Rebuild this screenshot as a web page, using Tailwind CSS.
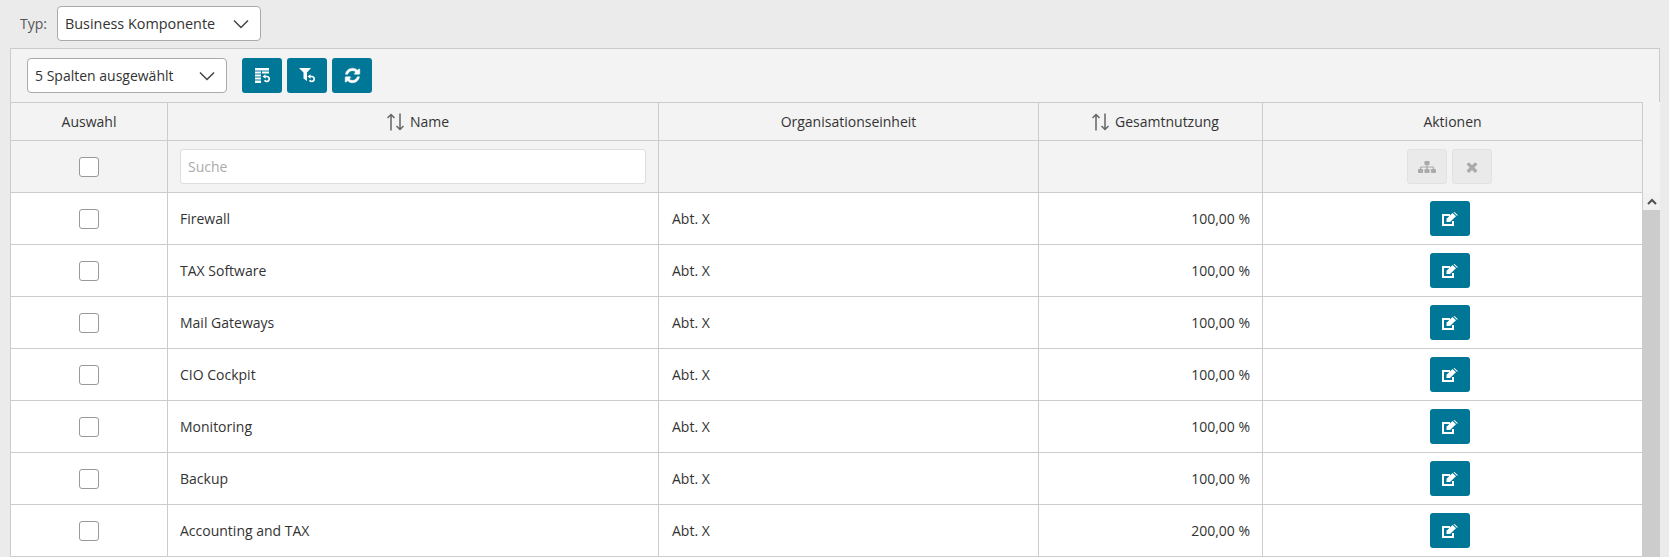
<!DOCTYPE html>
<html lang="de">
<head>
<meta charset="utf-8">
<title>Business Komponente</title>
<script src="https://cdn.jsdelivr.net/npm/@tailwindcss/browser@4"></script>
</head>
<body class="m-0 h-[557px] w-[1669px] overflow-hidden bg-[#ebebeb] font-['Open_Sans',sans-serif] text-[14px] text-[#333]">
<div class="flex h-[48px] items-start pl-[20px] pt-[6px]">
  <span class="mr-[10px] flex h-[35px] items-center text-[#555]">Typ:</span>
  <div class="flex h-[35px] w-[204px] items-center justify-between rounded-[4px] border border-[#aaa] bg-white pl-[7px] pr-[11px]">
    <span class="text-[14.4px]">Business Komponente</span>
    <svg width="16" height="10" viewBox="0 0 16 10" fill="none" stroke="#444" stroke-width="1.5"><path d="M1 1.5l7 7 7-7"/></svg>
  </div>
</div>
<div class="ml-[10px] h-[509px] w-[1650px] border-l border-t border-[#ccc] bg-[#f3f3f3]">
  <div class="flex h-[53px] items-start border-r border-[#ccc] pl-[16px] pt-[9px]">
    <div class="flex h-[35px] w-[200px] items-center justify-between rounded-[4px] border border-[#aaa] bg-white pl-[7px] pr-[11px]">
      <span>5 Spalten ausgewählt</span>
      <svg width="16" height="10" viewBox="0 0 16 10" fill="none" stroke="#444" stroke-width="1.5"><path d="M1 1.5l7 7 7-7"/></svg>
    </div>
    <div class="ml-[15px] flex gap-[5px]">
      <button class="flex h-[35px] w-[40px] items-center justify-center rounded-[3px] bg-[#007796]">
        <svg width="15" height="15" viewBox="0 0 15 15" fill="#fff"><path d="M0 0h14v2.500H0zM0 3.500h6v2H0zM7 3.500h7v2H7zM0 6.500h6v2H0zM0 9.500h6v2H0zM0 12.500h6V15H0z"/><path d="M9 8.500h3a2.500 2.500 0 1 1-2.400 3.800" fill="none" stroke="#fff" stroke-width="1.700"/><path d="M7.500 8.500l3-2.200v4.400z"/></svg>
      </button>
      <button class="flex h-[35px] w-[40px] items-center justify-center rounded-[3px] bg-[#007796]">
        <svg width="16" height="15" viewBox="0 0 16 15" fill="#fff"><path d="M0 0h12L8 4.500V13L4.500 10.500V4.500z"/><path d="M10 8.500h3a2.500 2.500 0 1 1-2.400 3.800" fill="none" stroke="#fff" stroke-width="1.700"/><path d="M8.500 8.500l3-2.200v4.400z"/></svg>
      </button>
      <button class="flex h-[35px] w-[40px] items-center justify-center rounded-[3px] bg-[#007796]">
        <svg width="17" height="17" viewBox="0 0 1792 1792" fill="#fff" stroke="#fff" stroke-width="50"><path d="M1639 1056q0 5-1 7-64 268-268 434.500t-478 166.500q-146 0-282.500-55t-243.500-157l-129 129q-19 19-45 19t-45-19-19-45v-448q0-26 19-45t45-19h448q26 0 45 19t19 45-19 45l-137 137q71 66 161 102t187 36q134 0 250-65t186-179q11-17 53-117 8-23 30-23h192q13 0 22.500 9.500t9.500 22.500zm25-800v448q0 26-19 45t-45 19h-448q-26 0-45-19t-19-45 19-45l138-138q-148-137-349-137-134 0-250 65t-186 179q-11 17-53 117-8 23-30 23h-199q-13 0-22.500-9.500t-9.500-22.500v-7q65-268 270-434.500t480-166.500q146 0 284 55.500t245 156.500l130-129q19-19 45-19t45 19 19 45z"/></svg>
      </button>
    </div>
  </div>

  <div class="grid w-[1632px] grid-cols-[157px_491px_380px_224px_380px] border-t border-[#ccc]">
    <div class="flex h-[38px] items-center justify-center border-r border-b border-[#ccc]">Auswahl</div>
    <div class="flex h-[38px] items-center justify-center gap-[6px] border-r border-b border-[#ccc] pl-[10px]">
      <svg width="17" height="18" viewBox="0 0 17 18" fill="none" stroke="#666" stroke-width="1.500"><path d="M4 17.500V1.500M.5 5L4 1.500 7.500 5"/><path d="M13 .5v16M9.500 13L13 16.500 16.500 13"/></svg>
      <span>Name</span>
    </div>
    <div class="flex h-[38px] items-center justify-center border-r border-b border-[#ccc]">Organisationseinheit</div>
    <div class="flex h-[38px] items-center justify-center gap-[6px] border-r border-b border-[#ccc] pl-[10px]">
      <svg width="17" height="18" viewBox="0 0 17 18" fill="none" stroke="#666" stroke-width="1.500"><path d="M4 17.500V1.500M.5 5L4 1.500 7.500 5"/><path d="M13 .5v16M9.500 13L13 16.500 16.500 13"/></svg>
      <span>Gesamtnutzung</span>
    </div>
    <div class="flex h-[38px] items-center justify-center border-r border-b border-[#ccc]">Aktionen</div>

    <div class="flex h-[52px] items-center justify-center border-r border-b border-[#ccc]">
      <span class="h-[20px] w-[20px] rounded-[3px] border border-[#999] bg-white"></span>
    </div>
    <div class="flex h-[52px] items-center border-r border-b border-[#ccc] px-[12px]">
      <div class="flex h-[35px] w-full items-center rounded-[3px] border border-[#ddd] bg-white px-[7px] text-[#aaa]">Suche</div>
    </div>
    <div class="h-[52px] border-r border-b border-[#ccc]"></div>
    <div class="h-[52px] border-r border-b border-[#ccc]"></div>
    <div class="flex h-[52px] items-center justify-center gap-[5px] border-r border-b border-[#ccc] pr-[6px]">
      <span class="flex h-[35px] w-[40px] items-center justify-center rounded-[3px] border border-[#e2e2e2] bg-[#eaeaea]">
        <svg width="18" height="14" viewBox="0 0 1792 1792" preserveAspectRatio="none" fill="#aaa"><path d="M1792 1248v320q0 40-28 68t-68 28h-320q-40 0-68-28t-28-68v-320q0-40 28-68t68-28h96v-192h-512v192h96q40 0 68 28t28 68v320q0 40-28 68t-68 28h-320q-40 0-68-28t-28-68v-320q0-40 28-68t68-28h96v-192h-512v192h96q40 0 68 28t28 68v320q0 40-28 68t-68 28h-320q-40 0-68-28t-28-68v-320q0-40 28-68t68-28h96v-192q0-52 38-90t90-38h512v-192h-96q-40 0-68-28t-28-68v-320q0-40 28-68t68-28h320q40 0 68 28t28 68v320q0 40-28 68t-68 28h-96v192h512q52 0 90 38t38 90v192h96q40 0 68 28t28 68z"/></svg>
      </span>
      <span class="flex h-[35px] w-[40px] items-center justify-center rounded-[3px] border border-[#e2e2e2] bg-[#eaeaea]">
        <svg width="12" height="12" viewBox="200 200 1392 1392" fill="#aaa"><path d="M1490 1322q0 40-28 68l-136 136q-28 28-68 28t-68-28l-294-294-294 294q-28 28-68 28t-68-28l-136-136q-28-28-28-68t28-68l294-294-294-294q-28-28-28-68t28-68l136-136q28-28 68-28t68 28l294 294 294-294q28-28 68-28t68 28l136 136q28 28 28 68t-28 68l-294 294 294 294q28 28 28 68z"/></svg>
      </span>
    </div>
  </div>

  <div class="flex items-start">
    <div class="grid w-[1632px] grid-cols-[157px_491px_380px_224px_380px] bg-white">
      <div class="flex h-[52px] items-center justify-center border-r border-b border-[#ccc]"><span class="h-[20px] w-[20px] rounded-[3px] border border-[#999] bg-white"></span></div>
      <div class="flex h-[52px] items-center border-r border-b border-[#ccc] px-[12px]">Firewall</div>
      <div class="flex h-[52px] items-center border-r border-b border-[#ccc] px-[13px]">Abt. X</div>
      <div class="flex h-[52px] items-center justify-end border-r border-b border-[#ccc] px-[12px]">100,00 %</div>
      <div class="flex h-[52px] items-center justify-center border-r border-b border-[#ccc] pr-[5px]"><button class="flex h-[35px] w-[40px] items-center justify-center rounded-[3px] bg-[#007796]"><svg width="16" height="14" viewBox="0 0 16 14"><path d="M8 3H1v10h10V9" fill="none" stroke="#fff" stroke-width="2"/><path d="M4.500 6.700L10.500 1 14 4.300 8 10H4.500zM11.600.5l.9-.5 3.200 2.900-.5 1.100z" fill="#fff"/></svg></button></div>

      <div class="flex h-[52px] items-center justify-center border-r border-b border-[#ccc]"><span class="h-[20px] w-[20px] rounded-[3px] border border-[#999] bg-white"></span></div>
      <div class="flex h-[52px] items-center border-r border-b border-[#ccc] px-[12px]">TAX Software</div>
      <div class="flex h-[52px] items-center border-r border-b border-[#ccc] px-[13px]">Abt. X</div>
      <div class="flex h-[52px] items-center justify-end border-r border-b border-[#ccc] px-[12px]">100,00 %</div>
      <div class="flex h-[52px] items-center justify-center border-r border-b border-[#ccc] pr-[5px]"><button class="flex h-[35px] w-[40px] items-center justify-center rounded-[3px] bg-[#007796]"><svg width="16" height="14" viewBox="0 0 16 14"><path d="M8 3H1v10h10V9" fill="none" stroke="#fff" stroke-width="2"/><path d="M4.500 6.700L10.500 1 14 4.300 8 10H4.500zM11.600.5l.9-.5 3.200 2.900-.5 1.100z" fill="#fff"/></svg></button></div>

      <div class="flex h-[52px] items-center justify-center border-r border-b border-[#ccc]"><span class="h-[20px] w-[20px] rounded-[3px] border border-[#999] bg-white"></span></div>
      <div class="flex h-[52px] items-center border-r border-b border-[#ccc] px-[12px]">Mail Gateways</div>
      <div class="flex h-[52px] items-center border-r border-b border-[#ccc] px-[13px]">Abt. X</div>
      <div class="flex h-[52px] items-center justify-end border-r border-b border-[#ccc] px-[12px]">100,00 %</div>
      <div class="flex h-[52px] items-center justify-center border-r border-b border-[#ccc] pr-[5px]"><button class="flex h-[35px] w-[40px] items-center justify-center rounded-[3px] bg-[#007796]"><svg width="16" height="14" viewBox="0 0 16 14"><path d="M8 3H1v10h10V9" fill="none" stroke="#fff" stroke-width="2"/><path d="M4.500 6.700L10.500 1 14 4.300 8 10H4.500zM11.600.5l.9-.5 3.200 2.900-.5 1.100z" fill="#fff"/></svg></button></div>

      <div class="flex h-[52px] items-center justify-center border-r border-b border-[#ccc]"><span class="h-[20px] w-[20px] rounded-[3px] border border-[#999] bg-white"></span></div>
      <div class="flex h-[52px] items-center border-r border-b border-[#ccc] px-[12px]">CIO Cockpit</div>
      <div class="flex h-[52px] items-center border-r border-b border-[#ccc] px-[13px]">Abt. X</div>
      <div class="flex h-[52px] items-center justify-end border-r border-b border-[#ccc] px-[12px]">100,00 %</div>
      <div class="flex h-[52px] items-center justify-center border-r border-b border-[#ccc] pr-[5px]"><button class="flex h-[35px] w-[40px] items-center justify-center rounded-[3px] bg-[#007796]"><svg width="16" height="14" viewBox="0 0 16 14"><path d="M8 3H1v10h10V9" fill="none" stroke="#fff" stroke-width="2"/><path d="M4.500 6.700L10.500 1 14 4.300 8 10H4.500zM11.600.5l.9-.5 3.200 2.900-.5 1.100z" fill="#fff"/></svg></button></div>

      <div class="flex h-[52px] items-center justify-center border-r border-b border-[#ccc]"><span class="h-[20px] w-[20px] rounded-[3px] border border-[#999] bg-white"></span></div>
      <div class="flex h-[52px] items-center border-r border-b border-[#ccc] px-[12px]">Monitoring</div>
      <div class="flex h-[52px] items-center border-r border-b border-[#ccc] px-[13px]">Abt. X</div>
      <div class="flex h-[52px] items-center justify-end border-r border-b border-[#ccc] px-[12px]">100,00 %</div>
      <div class="flex h-[52px] items-center justify-center border-r border-b border-[#ccc] pr-[5px]"><button class="flex h-[35px] w-[40px] items-center justify-center rounded-[3px] bg-[#007796]"><svg width="16" height="14" viewBox="0 0 16 14"><path d="M8 3H1v10h10V9" fill="none" stroke="#fff" stroke-width="2"/><path d="M4.500 6.700L10.500 1 14 4.300 8 10H4.500zM11.600.5l.9-.5 3.200 2.900-.5 1.100z" fill="#fff"/></svg></button></div>

      <div class="flex h-[52px] items-center justify-center border-r border-b border-[#ccc]"><span class="h-[20px] w-[20px] rounded-[3px] border border-[#999] bg-white"></span></div>
      <div class="flex h-[52px] items-center border-r border-b border-[#ccc] px-[12px]">Backup</div>
      <div class="flex h-[52px] items-center border-r border-b border-[#ccc] px-[13px]">Abt. X</div>
      <div class="flex h-[52px] items-center justify-end border-r border-b border-[#ccc] px-[12px]">100,00 %</div>
      <div class="flex h-[52px] items-center justify-center border-r border-b border-[#ccc] pr-[5px]"><button class="flex h-[35px] w-[40px] items-center justify-center rounded-[3px] bg-[#007796]"><svg width="16" height="14" viewBox="0 0 16 14"><path d="M8 3H1v10h10V9" fill="none" stroke="#fff" stroke-width="2"/><path d="M4.500 6.700L10.500 1 14 4.300 8 10H4.500zM11.600.5l.9-.5 3.200 2.900-.5 1.100z" fill="#fff"/></svg></button></div>

      <div class="flex h-[52px] items-center justify-center border-r border-b border-[#ccc]"><span class="h-[20px] w-[20px] rounded-[3px] border border-[#999] bg-white"></span></div>
      <div class="flex h-[52px] items-center border-r border-b border-[#ccc] px-[12px]">Accounting and TAX</div>
      <div class="flex h-[52px] items-center border-r border-b border-[#ccc] px-[13px]">Abt. X</div>
      <div class="flex h-[52px] items-center justify-end border-r border-b border-[#ccc] px-[12px]">200,00 %</div>
      <div class="flex h-[52px] items-center justify-center border-r border-b border-[#ccc] pr-[5px]"><button class="flex h-[35px] w-[40px] items-center justify-center rounded-[3px] bg-[#007796]"><svg width="16" height="14" viewBox="0 0 16 14"><path d="M8 3H1v10h10V9" fill="none" stroke="#fff" stroke-width="2"/><path d="M4.500 6.700L10.500 1 14 4.300 8 10H4.500zM11.600.5l.9-.5 3.200 2.900-.5 1.100z" fill="#fff"/></svg></button></div>
    </div>
    <div class="flex h-[364px] w-[18px] flex-col">
      <div class="flex h-[17px] items-center justify-center bg-[#f1f1f1]">
        <svg width="10" height="7" viewBox="0 0 10 7" fill="none" stroke="#505050" stroke-width="2"><path d="M1 6l4-4 4 4"/></svg>
      </div>
      <div class="flex-1 bg-[#ccc]"></div>
    </div>
  </div>
</div>
</body>
</html>
